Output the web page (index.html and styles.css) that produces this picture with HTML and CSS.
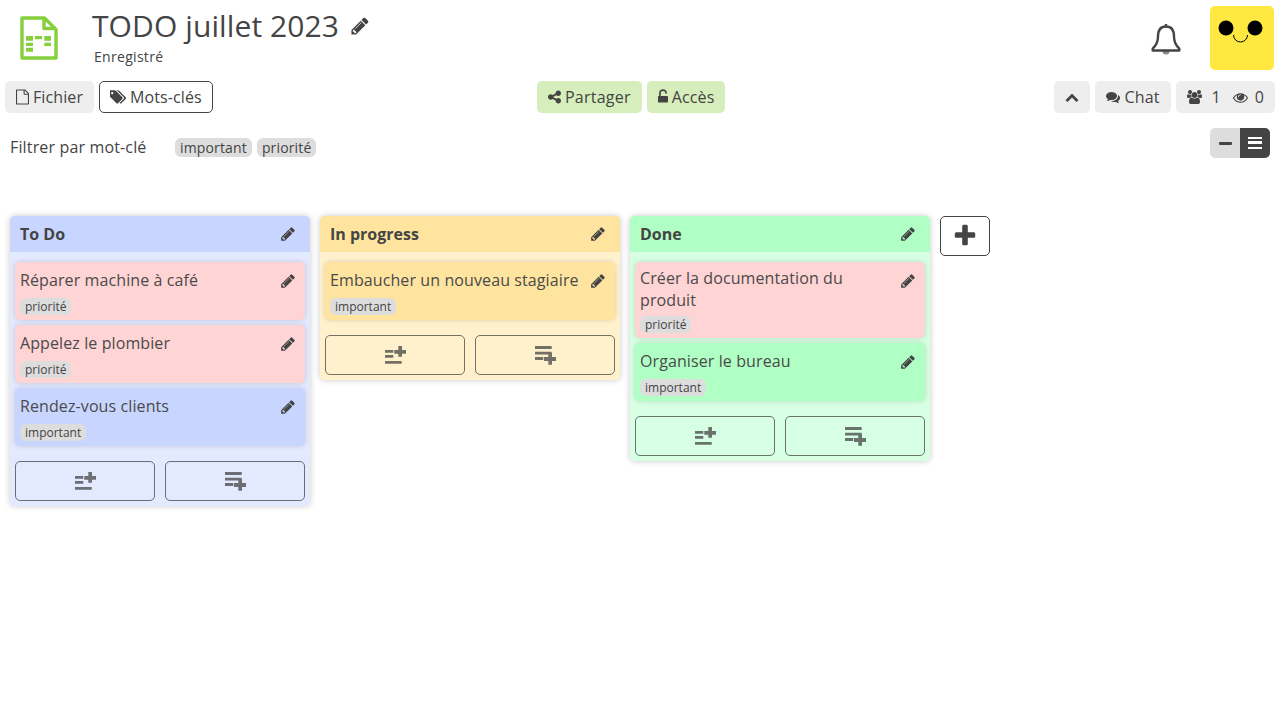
FILE: index.html
```html
<!DOCTYPE html>
<html lang="fr">
<head>
<meta charset="utf-8">
<title>TODO juillet 2023</title>
<link rel="stylesheet" href="styles.css">
</head>
<body>
<svg class="sprite" xmlns="http://www.w3.org/2000/svg">
  <symbol id="i-pencil" viewBox="0 0 1792 1792"><path d="M491 1536l91-91-235-235-91 91v107h128v128h107zm523-928q0-22-22-22-10 0-17 7l-542 542q-7 7-7 17 0 22 22 22 10 0 17-7l542-542q7-7 7-17zm-54-192l416 416-832 832h-416v-416zm683 96q0 53-37 90l-166 166-416-416 166-165q36-38 90-38 53 0 91 38l235 234q37 39 37 91z"/></symbol>
  <symbol id="i-file" viewBox="128 0 1536 1792"><path d="M1596 380q28 28 48 76t20 88v1152q0 40-28 68t-68 28h-1344q-40 0-68-28t-28-68v-1600q0-40 28-68t68-28h896q40 0 88 20t76 48zm-444-244v376h376q-10-29-22-41l-313-313q-12-12-41-22zm384 1528v-1024h-416q-40 0-68-28t-28-68v-416h-768v1536h1280z"/></symbol>
  <symbol id="i-tags" viewBox="0 0 1835 1792"><path d="M384 448q0-53-37.500-90.500t-90.500-37.500-90.500 37.500-37.500 90.500 37.500 90.500 90.500 37.500 90.500-37.500 37.500-90.500zm1067 576q0 53-37 90l-491 492q-39 37-91 37-53 0-90-37l-715-716q-38-37-64.500-101t-26.500-117v-416q0-52 38-90t90-38h416q53 0 117 26.500t102 64.500l715 714q37 39 37 91zm384 0q0 53-37 90l-491 492q-39 37-91 37-36 0-59-14t-53-45l470-470q37-37 37-90 0-52-37-91l-715-714q-38-38-102-64.500t-117-26.500h224q53 0 117 26.500t102 64.500l715 714q37 39 37 91z"/></symbol>
  <symbol id="i-share" viewBox="128 0 1536 1792"><path d="M1344 1024q133 0 226.500 93.500t93.500 226.500-93.500 226.500-226.500 93.500-226.500-93.500-93.500-226.500q0-12 2-34l-360-180q-92 86-218 86-133 0-226.500-93.500t-93.500-226.500 93.500-226.500 226.500-93.500q126 0 218 86l360-180q-2-22-2-34 0-133 93.500-226.500t226.500-93.500 226.500 93.500 93.500 226.500-93.500 226.500-226.500 93.500q-126 0-218-86l-360 180q2 22 2 34t-2 34l360 180q92-86 218-86z"/></symbol>
  <symbol id="i-unlock" viewBox="320 0 1152 1792"><path d="M1376 768q40 0 68 28t28 68v576q0 40-28 68t-68 28h-960q-40 0-68-28t-28-68v-576q0-40 28-68t68-28h32v-320q0-185 131.500-316.500t316.500-131.500 316.500 131.500 131.500 316.500q0 26-19 45t-45 19h-64q-26 0-45-19t-19-45q0-106-75-181t-181-75-181 75-75 181v320h736z"/></symbol>
  <symbol id="i-chevron" viewBox="0 0 1792 1792"><path d="M1683 1331l-166 165q-19 19-45 19t-45-19l-531-531-531 531q-19 19-45 19t-45-19l-166-165q-19-19-19-45.500t19-45.500l742-741q19-19 45-19t45 19l742 741q19 19 19 45.500t-19 45.500z"/></symbol>
  <symbol id="i-comments" viewBox="0 0 1792 1792"><path d="M1408 768q0 139-94 257t-256.500 186.500-353.500 68.500q-86 0-176-16-124 88-278 128-36 9-86 16h-3q-11 0-20.500-8t-11.500-21q-1-3-1-6.500t.5-6.500 2-6l2.500-5 3.500-5.500 4-5 4.500-5 4-4.500q5-6 23-25t26-29.500 22.500-29 25-38.500 20.500-44q-124-72-195-177t-71-224q0-139 94-257t256.500-186.500 353.500-68.500 353.500 68.500 256.500 186.500 94 257zm384 256q0 120-71 224.500t-195 176.500q10 24 20.500 44t25 38.500 22.500 29 26 29.500 23 25q1 1 4 4.500t4.500 5 4 5 3.500 5.500l2.500 5 2 6 .5 6.500-1 6.500q-3 14-13 22t-22 7q-50-7-86-16-154-40-278-128-90 16-176 16-271 0-472-132 58 4 88 4 161 0 309-45t264-129q125-92 192-212t67-254q0-77-23-152 129 71 204 178t75 230z"/></symbol>
  <symbol id="i-users" viewBox="0 0 1920 1792"><path d="M593 896q-162 5-265 128h-134q-82 0-138-40.500t-56-118.500q0-353 124-353 6 0 43.500 21t97.500 42.500 119 21.500q67 0 133-23-5 37-5 66 0 139 81 256zm1071 637q0 120-73 189.500t-194 69.500h-874q-121 0-194-69.500t-73-189.500q0-53 3.500-103.500t14-109 26.500-108.500 43-97.500 62-81 85.500-53.500 111.500-20q10 0 43 21.500t73 48 107 48 135 21.500 135-21.500 107-48 73-48 43-21.500q61 0 111.500 20t85.500 53.500 62 81 43 97.500 26.500 108.500 14 109 3.500 103.500zm-1024-1277q0 106-75 181t-181 75-181-75-75-181 75-181 181-75 181 75 75 181zm704 384q0 159-112.500 271.500t-271.500 112.500-271.500-112.500-112.500-271.500 112.500-271.500 271.500-112.500 271.500 112.500 112.500 271.500zm576 225q0 78-56 118.500t-138 40.500h-134q-103-123-265-128 81-117 81-256 0-29-5-66 66 23 133 23 59 0 119-21.500t97.500-42.500 43.500-21q124 0 124 353zm-128-609q0 106-75 181t-181 75-181-75-75-181 75-181 181-75 181 75 75 181z"/></symbol>
  <symbol id="i-eye" viewBox="0 0 1792 1792"><path d="M1664 960q-152-236-381-353 61 104 61 225 0 185-131.500 316.500t-316.500 131.500-316.500-131.500-131.500-316.500q0-121 61-225-229 117-381 353 133 205 333.500 326.500t434.500 121.500 434.500-121.500 333.500-326.500zm-720-384q0-20-14-34t-34-14q-125 0-214.500 89.500t-89.500 214.500q0 20 14 34t34 14 34-14 14-34q0-86 61-147t147-61q20 0 34-14t14-34zm848 384q0 34-20 69-140 230-376.500 368.500t-499.500 138.500-499.500-139-376.500-368q-20-35-20-69t20-69q140-229 376.500-368t499.500-139 499.500 139 376.500 368q20 35 20 69z"/></symbol>
  <symbol id="i-plus" viewBox="0 0 1792 1792"><path d="M1600 736v192q0 40-28 68t-68 28h-416v416q0 40-28 68t-68 28h-192q-40 0-68-28t-28-68v-416h-416q-40 0-68-28t-28-68v-192q0-40 28-68t68-28h416v-416q0-40 28-68t68-28h192q40 0 68 28t28 68v416h416q40 0 68 28t28 68z"/></symbol>
  <symbol id="i-add-top" viewBox="0 0 21 19"><path d="M0 4h8.300v2.700H0zM0 9h8.300v2.700H0zM0 15h16.700v2.700H0zM13.300 0H17v4h4v3.700h-4v3h-3.700v-3H9.300V4h4z"/></symbol>
  <symbol id="i-add-bottom" viewBox="0 0 21 19"><path d="M0 0h16.700v3H0zM0 5.700h16.700v2.700H0zM0 11h8.300v3H0zM13.300 7.300H17V11h4v4h-4v3.700h-3.700V15H9v-4h4.300z"/></symbol>
</svg>

<header class="top">
  <div class="doc">
    <svg class="doc-icon" viewBox="0 0 38 44"><path class="doc-sheet" d="M2 2h22.500L36 13.500V42H2zM24 2v10.500h12"/><path class="doc-cells" d="M6 20h7v4.700H6zM15 20h7v3.300h-7zM24.300 20H31v4.700h-6.700zM6 26.700h7V30H6zM24.300 26.700H31V30h-6.700zM6 31.700h7v4H6z"/></svg>
    <div class="doc-text">
      <h1 class="doc-title">TODO juillet 2023 <svg class="ic-title"><use href="#i-pencil"/></svg></h1>
      <div class="doc-status">Enregistré</div>
    </div>
  </div>
  <div class="user">
    <svg class="bell" viewBox="0 0 30 33"><path class="bell-clapper" d="M11.500 28a3.500 3.500 0 0 0 7 0z"/><path d="M15 3.500C9.500 3.500 7 7.500 7 13.500c0 6-1.800 8.800-5.300 12.200v1.800h26.600v-1.800C24.800 22.300 23 19.500 23 13.500c0-6-2.500-10-8-10zM15 3.500V1"/></svg>
    <div class="avatar">
      <svg viewBox="0 0 64 64" class="avatar-face"><circle cx="16" cy="22" r="7.500"/><circle cx="45" cy="22" r="7.500"/><path d="M23.500 29a7 7 0 0 0 14 0"/></svg>
    </div>
  </div>
</header>

<nav class="toolbar">
  <div class="tb-group">
    <button class="btn"><svg class="ic ic-file"><use href="#i-file"/></svg>Fichier</button>
    <button class="btn btn-outline"><svg class="ic"><use href="#i-tags"/></svg>Mots-clés</button>
  </div>
  <div class="tb-group tb-center">
    <button class="btn btn-green btn-share"><svg class="ic ic-file"><use href="#i-share"/></svg>Partager</button>
    <button class="btn btn-green"><svg class="ic ic-lock"><use href="#i-unlock"/></svg>Accès</button>
  </div>
  <div class="tb-group">
    <button class="btn btn-chevron"><svg class="ic ic-14"><use href="#i-chevron"/></svg></button>
    <button class="btn btn-chat"><svg class="ic ic-14"><use href="#i-comments"/></svg>Chat</button>
    <button class="btn btn-stats"><svg class="ic ic-users"><use href="#i-users"/></svg><span class="stat">1</span><svg class="ic ic-eye"><use href="#i-eye"/></svg><span class="stat-last">0</span></button>
  </div>
</nav>

<section class="filter">
  <span class="filter-label">Filtrer par mot-clé</span>
  <span class="tag tag-lg">important</span>
  <span class="tag tag-lg">priorité</span>
  <div class="toggle">
    <span class="toggle-btn"><span class="dash"></span></span>
    <span class="toggle-btn is-on"><span class="bars"></span></span>
  </div>
</section>

<main class="board">
  <section class="col col-blue">
    <div class="col-head"><span>To Do</span><svg class="ic"><use href="#i-pencil"/></svg></div>
    <div class="cards">
      <article class="card c-red"><div class="card-top"><span>Réparer machine à café</span><svg class="ic"><use href="#i-pencil"/></svg></div><span class="tag">priorité</span></article>
      <article class="card c-red"><div class="card-top"><span>Appelez le plombier</span><svg class="ic"><use href="#i-pencil"/></svg></div><span class="tag">priorité</span></article>
      <article class="card c-blue"><div class="card-top"><span>Rendez-vous clients</span><svg class="ic"><use href="#i-pencil"/></svg></div><span class="tag">important</span></article>
    </div>
    <div class="col-actions">
      <button class="add"><svg class="ic-add"><use href="#i-add-top"/></svg></button>
      <button class="add"><svg class="ic-add"><use href="#i-add-bottom"/></svg></button>
    </div>
  </section>
  <section class="col col-yellow">
    <div class="col-head"><span>In progress</span><svg class="ic"><use href="#i-pencil"/></svg></div>
    <div class="cards">
      <article class="card c-yellow"><div class="card-top"><span>Embaucher un nouveau stagiaire</span><svg class="ic"><use href="#i-pencil"/></svg></div><span class="tag">important</span></article>
    </div>
    <div class="col-actions">
      <button class="add"><svg class="ic-add"><use href="#i-add-top"/></svg></button>
      <button class="add"><svg class="ic-add"><use href="#i-add-bottom"/></svg></button>
    </div>
  </section>
  <section class="col col-green">
    <div class="col-head"><span>Done</span><svg class="ic"><use href="#i-pencil"/></svg></div>
    <div class="cards">
      <article class="card c-red"><div class="card-top"><span>Créer la documentation du produit</span><svg class="ic"><use href="#i-pencil"/></svg></div><span class="tag">priorité</span></article>
      <article class="card c-green"><div class="card-top"><span>Organiser le bureau</span><svg class="ic"><use href="#i-pencil"/></svg></div><span class="tag">important</span></article>
    </div>
    <div class="col-actions">
      <button class="add"><svg class="ic-add"><use href="#i-add-top"/></svg></button>
      <button class="add"><svg class="ic-add"><use href="#i-add-bottom"/></svg></button>
    </div>
  </section>
  <button class="add-col"><svg class="ic-plus"><use href="#i-plus"/></svg></button>
</main>
</body>
</html>
```

FILE: styles.css
```css
* { box-sizing: border-box; }
html, body { margin: 0; padding: 0; background: #fff; }
body {
  font-family: "Open Sans", "Noto Sans", sans-serif;
  color: #444;
  font-size: 16px;
  line-height: 22px;
  letter-spacing: .1px;
  height: 720px;
  overflow: hidden;
}
.sprite { display: block; width: 0; height: 0; position: absolute; }
svg { fill: currentColor; }

.ic { width: 16px; height: 16px; flex: none; }
.ic-file { width: 13px; }
.ic-lock { width: 10px; }
.ic-14 { width: 14px; height: 14px; }
.ic-users { width: 15px; height: 14px; }
.ic-eye { width: 15px; height: 15px; margin-left: 8px; }

/* header */
.top { display: flex; justify-content: space-between; height: 81px; padding: 6px 6px 0 0; }
.doc { display: flex; padding-left: 20px; }
.doc-icon { width: 38px; height: 44px; margin-top: 10px; }
.doc-sheet { fill: none; stroke: #86d03d; stroke-width: 3.4; stroke-linejoin: round; }
.doc-cells { fill: #86d03d; }
.doc-text { margin-left: 34px; }
.doc-title { margin: 0; font-size: 30px; line-height: 40px; font-weight: 400; display: flex; align-items: center; gap: 11px; }
.ic-title { width: 20px; height: 20px; margin-top: -1px; }
.doc-status { font-size: 14px; line-height: 20px; margin: 1px 0 0 2px; letter-spacing: .3px; }

.user { display: flex; align-items: flex-start; }
.bell { width: 30px; height: 33px; margin: 17px 29px 0 0; fill: none; stroke: #444; stroke-width: 2.4; stroke-linejoin: round; }
.bell-clapper { fill: #888; stroke: none; }
.avatar { width: 64px; height: 64px; background: #ffe83f; border-radius: 5px; }
.avatar-face { width: 64px; height: 64px; display: block; fill: #000; }
.avatar-face path { fill: none; stroke: #000; stroke-width: 1; }

/* toolbar */
.toolbar { display: flex; justify-content: space-between; padding: 0 5px; height: 32px; }
.tb-group { display: flex; gap: 5px; }
.tb-center { margin-right: 4px; }
.btn {
  font: inherit; letter-spacing: inherit; color: inherit; height: 32px; padding: 0 11px;
  border: 0; border-radius: 5px; background: #eee;
  display: flex; align-items: center; gap: 4px; white-space: nowrap;
}
.btn-outline { background: #fff; border: 1px solid #444; padding: 0 10px; }
.btn-green { background: #d5eebb; }
.btn-share { letter-spacing: .25px; }
.btn-chevron { padding: 0 11px; }
.btn-chat { gap: 5px; padding-right: 12px; }
.stat { margin-left: 5px; }
.stat-last { margin-left: 3px; }

/* filter */
.filter { display: flex; align-items: flex-start; height: 30px; margin-top: 15px; padding: 0 10px; gap: 5px; }
.filter-label { width: 160px; margin-top: 8px; letter-spacing: .15px; }
.tag {
  display: inline-block; background: #ddd; border-radius: 6px;
  font-size: 12px; line-height: 17px; padding: 0 5px; letter-spacing: 0;
}
.tag-lg { font-size: 14px; line-height: 19px; margin-top: 10px; letter-spacing: .15px; }
.toggle { margin-left: auto; display: flex; }
.toggle-btn { width: 30px; height: 30px; background: #ddd; display: flex; align-items: center; justify-content: center; border-radius: 5px 0 0 5px; }
.toggle-btn.is-on { background: #444; border-radius: 0 5px 5px 0; }
.dash { width: 13px; height: 3px; background: #444; border-radius: 1px; }
.bars { width: 14px; height: 12px; border-top: 2.5px solid #fff; border-bottom: 2.5px solid #fff; position: relative; }
.bars::after { content: ""; position: absolute; left: 0; right: 0; top: 2.3px; height: 2.5px; background: #fff; }

/* board */
.board { display: flex; align-items: flex-start; gap: 10px; padding: 58px 10px 0; }
.col { width: 300px; border-radius: 5px; box-shadow: 0 0 6px rgba(0,0,0,.22); overflow: hidden; }
.col-head { height: 36px; padding: 0 14px 0 10px; display: flex; align-items: center; justify-content: space-between; font-weight: 700; letter-spacing: 0; }
.cards { display: flex; flex-direction: column; gap: 5px; padding: 10px 5px 0; }
.card { display: flex; flex-direction: column; align-items: flex-start; gap: 5px; padding: 5px; border-radius: 5px; box-shadow: 0 0 5px rgba(0,0,0,.15); }
.card-top { align-self: stretch; display: flex; justify-content: space-between; align-items: center; min-height: 26px; padding-right: 4px; gap: 10px; color: #4a4a4a; }
.card-top .ic { align-self: flex-start; margin-top: 6px; color: #444; }
.col-actions { display: flex; justify-content: space-between; padding: 15px 5px 5px; }
.add { width: 140px; height: 40px; background: transparent; border: 1px solid #444; border-radius: 5px; padding: 0; display: flex; align-items: center; justify-content: center; color: #444; opacity: .75; }
.ic-add { width: 21px; height: 19px; display: block; }
.add-col { width: 50px; height: 40px; background: #fff; border: 1px solid #444; border-radius: 5px; padding: 0; display: flex; align-items: center; justify-content: center; color: #444; }
.ic-plus { width: 26px; height: 26px; }

.col-blue { background: #e3e9ff; }
.col-blue .col-head { background: #c8d5ff; }
.col-yellow { background: #fff1cc; }
.col-yellow .col-head { background: #ffe49f; }
.col-green { background: #d7ffe3; }
.col-green .col-head { background: #b0ffc4; }
.c-red { background: #ffd4d5; }
.c-blue { background: #c8d5ff; }
.c-yellow { background: #ffe49f; }
.c-green { background: #b0ffc4; }
```
